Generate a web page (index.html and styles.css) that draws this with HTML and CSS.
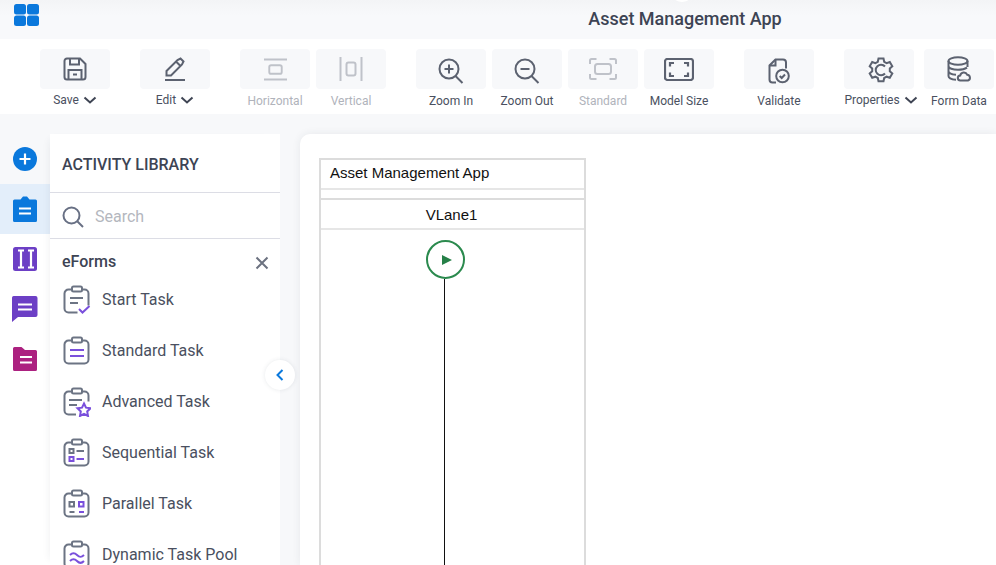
FILE: index.html
```html
<!DOCTYPE html>
<html lang="en">
<head>
<meta charset="utf-8">
<title>Asset Management App</title>
<link rel="stylesheet" href="styles.css">
</head>
<body>
<div class="app">
  <header class="topbar">
    <svg class="logo" viewBox="0 0 26 24"><rect x="1" y="1" width="12" height="10.500" rx="2.500"/><rect x="14" y="1" width="12" height="10.500" rx="2.500"/><rect x="1" y="12.500" width="12" height="10.500" rx="2.500"/><rect x="14" y="12.500" width="12" height="10.500" rx="2.500"/></svg>
    <h1 class="app-title">Asset Management App</h1>
    <span class="top-notch"></span>
  </header>

  <nav class="toolbar">
    <div class="tool tool-save">
      <div class="tool-box"><svg viewBox="0 0 24 24" class="ico"><path d="M4 1.500h13l5.500 5.500v13a2.500 2.500 0 0 1-2.500 2.500h-16a2.500 2.500 0 0 1-2.500-2.500v-16a2.500 2.500 0 0 1 2.500-2.500z"/><path d="M7 1.500v6h9v-6M5.500 22.500v-9.500h13v9.500M10 17.500h4"/></svg></div>
      <div class="tool-label tool-label-menu">Save <svg class="chev" viewBox="0 0 14 8"><path d="M1.500 1.500l5.500 5 5.500-5"/></svg></div>
    </div>
    <div class="tool tool-edit">
      <div class="tool-box"><svg viewBox="0 0 24 24" class="ico"><path d="M3.500 18.500v-4.500l11-11 3 -1.500 3 3-1.500 3-11 11zM13 4.500l5 5"/><path d="M2 23h20"/></svg></div>
      <div class="tool-label tool-label-menu">Edit <svg class="chev" viewBox="0 0 14 8"><path d="M1.500 1.500l5.500 5 5.500-5"/></svg></div>
    </div>
    <div class="tool tool-off tool-horizontal">
      <div class="tool-box"><svg viewBox="0 0 26 24" class="ico ico-wide"><path d="M1 1.500h24M1 22.500h24"/><rect x="6.500" y="7.500" width="13" height="9" rx="2"/></svg></div>
      <div class="tool-label">Horizontal</div>
    </div>
    <div class="tool tool-off tool-vertical">
      <div class="tool-box"><svg viewBox="0 0 24 24" class="ico"><path d="M1.500 0v24M22.500 0v24"/><rect x="7.500" y="5.500" width="9" height="13" rx="2"/></svg></div>
      <div class="tool-label">Vertical</div>
    </div>
    <div class="tool tool-zoomin">
      <div class="tool-box"><svg viewBox="0 0 26 26" class="ico ico-lg ico-low"><circle cx="11" cy="11" r="9.500"/><path d="M17.500 18l7 7M11 6.500v9M6.500 11h9"/></svg></div>
      <div class="tool-label">Zoom In</div>
    </div>
    <div class="tool tool-zoomout">
      <div class="tool-box"><svg viewBox="0 0 26 26" class="ico ico-lg ico-low"><circle cx="11" cy="11" r="9.500"/><path d="M17.500 18l7 7M6.500 11h9"/></svg></div>
      <div class="tool-label">Zoom Out</div>
    </div>
    <div class="tool tool-off tool-standard">
      <div class="tool-box"><svg viewBox="0 0 28 22" class="ico ico-frame"><path d="M1 6v-3.500a1.500 1.500 0 0 1 1.500-1.500h5M20.500 1h5a1.500 1.500 0 0 1 1.500 1.500v3.500M27 16v3.500a1.500 1.500 0 0 1-1.500 1.500h-5M7.500 21h-5a1.500 1.500 0 0 1-1.500-1.500v-3.500"/><rect x="6" y="6" width="16" height="10" rx="2.500"/></svg></div>
      <div class="tool-label">Standard</div>
    </div>
    <div class="tool tool-model">
      <div class="tool-box"><svg viewBox="0 0 30 23" class="ico ico-frame-lg"><rect x="1" y="1" width="28" height="21" rx="2.500"/><path d="M6 8.500v-3.500h4M20 5h4v3.500M24 14.500v3.500h-4M10 18h-4v-3.500"/></svg></div>
      <div class="tool-label">Model Size</div>
    </div>
    <div class="tool tool-validate">
      <div class="tool-box"><svg viewBox="0 0 22 26" class="ico ico-tall ico-low"><path d="M8 24.500h-3.500a3 3 0 0 1-3-3v-14l6-6h7.500a3 3 0 0 1 3 3v6"/><path d="M7.500 1.500v6h-6"/><circle cx="14.500" cy="18" r="6.300"/><path d="M11.700 18l2 2 3.300-3.500"/></svg></div>
      <div class="tool-label">Validate</div>
    </div>
    <div class="tool tool-props">
      <div class="tool-box"><svg viewBox="0 0 26 26" class="ico ico-lg ico-gear"><path d="M10.500 1.500h5l.7 3.300 2.400 1.300 3.200-1.100 2.500 4.300-2.500 2.200v2.800l2.500 2.200-2.500 4.300-3.200-1.100-2.400 1.300-.7 3.300h-5l-.7-3.300-2.400-1.300-3.200 1.100-2.500-4.300 2.500-2.200v-2.800l-2.500-2.200 2.500-4.300 3.200 1.100 2.400-1.300z"/><path d="M17 9.500a5.300 5.300 0 1 0 0 7"/></svg></div>
      <div class="tool-label tool-label-menu tool-label-props">Properties <svg class="chev" viewBox="0 0 14 8"><path d="M1.500 1.500l5.500 5 5.500-5"/></svg></div>
    </div>
    <div class="tool tool-data">
      <div class="tool-box"><svg viewBox="0 0 24 26" class="ico ico-lg"><ellipse cx="11" cy="5" rx="9.500" ry="3.800"/><path d="M1.500 5v15c0 2 3.500 3.500 7.500 3.800M20.500 5v6M1.500 10c0 2.200 4.200 3.800 9.500 3.800 3.500 0 7-.8 9-2.200M1.500 15c0 2 3.500 3.500 7.500 3.800"/><path d="M13.500 24.500a2.500 2.500 0 0 1-.3-5 3.700 3.700 0 0 1 7-.8 3 3 0 0 1 .8 5.800z"/></svg></div>
      <div class="tool-label">Form Data</div>
    </div>
  </nav>

  <div class="workspace">
    <aside class="rail">
      <div class="rail-item"><svg class="rail-ico" viewBox="0 0 24 24"><circle cx="12" cy="12" r="12" fill="#0a78dc"/><path d="M12 6.500v11M6.500 12h11" class="rail-w"/></svg></div>
      <div class="rail-item rail-active"><svg class="rail-ico rail-ico-clip" viewBox="0 0 24 26"><path fill="#0a78dc" d="M1.500 3.500h6l2.500-3h4l2.500 3h6a1.500 1.500 0 0 1 1.500 1.500v19.500a1.500 1.500 0 0 1-1.500 1.500h-21a1.500 1.500 0 0 1-1.500-1.500v-19.500a1.500 1.500 0 0 1 1.500-1.500z"/><path d="M6 12.500h12M6 17.500h12" class="rail-w"/></svg></div>
      <div class="rail-item"><svg class="rail-ico" viewBox="0 0 24 24"><rect width="24" height="24" rx="2.500" fill="#6c3fc5"/><path d="M5 3.500h6M8 3.500v17M5 20.500h6M15 3.500h6M18 3.500v17M15 20.500h6" class="rail-w"/></svg></div>
      <div class="rail-item"><svg class="rail-ico rail-ico-chat" viewBox="0 0 26 26"><path fill="#6c3fc5" d="M2.500 0h21a2 2 0 0 1 2 2v17a2 2 0 0 1-2 2h-17.500l-6 5v-24a2 2 0 0 1 2.500-2z"/><path d="M6 8.500h14M6 13.500h14" class="rail-w"/></svg></div>
      <div class="rail-item"><svg class="rail-ico" viewBox="0 0 24 24"><path fill="#ac2180" d="M0 1.500a1.500 1.500 0 0 1 1.500-1.500h7l3.500 3h10.500a1.500 1.500 0 0 1 1.500 1.500v18a1.500 1.500 0 0 1-1.500 1.500h-21a1.500 1.500 0 0 1-1.500-1.500z"/><path d="M7 10h12M7 15.500h12" class="rail-w"/></svg></div>
    </aside>

    <section class="library">
      <h2 class="lib-title">ACTIVITY LIBRARY</h2>
      <div class="lib-search">
        <svg class="search-ico" viewBox="0 0 22 22"><circle cx="9.500" cy="9.500" r="8"/><path d="M15.500 15.500l5.500 5.500"/></svg>
        <span class="search-text">Search</span>
      </div>
      <div class="lib-group">
        <span>eForms</span>
        <svg class="close-ico" viewBox="0 0 14 14"><path d="M1.500 1.500l11 11M12.500 1.500l-11 11"/></svg>
      </div>
      <ul class="task-list">
        <li class="task"><svg class="task-ico" viewBox="0 0 28 30"><path class="g" d="M9 4.500h-3.500a4 4 0 0 0-4 4v15a4 4 0 0 0 4 4h9M19 4.500h2.500a4 4 0 0 1 4 4v12"/><rect class="g" x="9" y="1.500" width="10" height="5" rx="1.500"/><path class="g" d="M7 13h13M7 18h8"/><path class="p" d="M16 24l3.500 3.500 7-6.500"/></svg><span>Start Task</span></li>
        <li class="task"><svg class="task-ico" viewBox="0 0 28 30"><path class="g" d="M9 4.500h-3.500a4 4 0 0 0-4 4v15a4 4 0 0 0 4 4h16a4 4 0 0 0 4-4v-15a4 4 0 0 0-4-4h-2.500"/><rect class="g" x="9" y="1.500" width="10" height="5" rx="1.500"/><path class="p" d="M7 14h14M7 20h14"/></svg><span>Standard Task</span></li>
        <li class="task"><svg class="task-ico" viewBox="0 0 28 30"><path class="g" d="M9 4.500h-3.500a4 4 0 0 0-4 4v15a4 4 0 0 0 4 4h7.500M19 4.500h2.500a4 4 0 0 1 4 4v6"/><rect class="g" x="9" y="1.500" width="10" height="5" rx="1.500"/><path class="g" d="M6 13h13M6 18h8"/><path class="p" d="M21 16.500l2 4.200 4.500.6-3.300 3.100.8 4.600-4-2.200-4 2.200.8-4.600-3.300-3.100 4.500-.6z"/></svg><span>Advanced Task</span></li>
        <li class="task"><svg class="task-ico" viewBox="0 0 28 30"><path class="g" d="M9 4.500h-3.500a4 4 0 0 0-4 4v15a4 4 0 0 0 4 4h16a4 4 0 0 0 4-4v-15a4 4 0 0 0-4-4h-2.500"/><rect class="g" x="9" y="1.500" width="10" height="5" rx="1.500"/><rect class="g" x="6.500" y="11" width="4" height="4"/><path class="g" d="M13.500 13h7.500"/><rect class="p" x="6.500" y="19" width="4" height="4"/><path class="p" d="M13.500 21h7.500"/></svg><span>Sequential Task</span></li>
        <li class="task"><svg class="task-ico" viewBox="0 0 28 30"><path class="g" d="M9 4.500h-3.500a4 4 0 0 0-4 4v15a4 4 0 0 0 4 4h16a4 4 0 0 0 4-4v-15a4 4 0 0 0-4-4h-2.500"/><rect class="g" x="9" y="1.500" width="10" height="5" rx="1.500"/><rect class="g" x="6.500" y="13" width="4.500" height="4.500"/><rect class="p" x="16" y="13" width="4.500" height="4.500"/><path class="g" d="M6.500 23h5"/><path class="p" d="M16 23h5"/></svg><span>Parallel Task</span></li>
        <li class="task"><svg class="task-ico" viewBox="0 0 28 30"><path class="g" d="M9 4.500h-3.500a4 4 0 0 0-4 4v15a4 4 0 0 0 4 4h16a4 4 0 0 0 4-4v-15a4 4 0 0 0-4-4h-2.500"/><rect class="g" x="9" y="1.500" width="10" height="5" rx="1.500"/><path class="p" d="M7 15c2.500-2.500 4.500-2.500 7 0s4.500 2.500 7 0M7 21c2.500-2.500 4.500-2.500 7 0s4.500 2.500 7 0"/></svg><span>Dynamic Task Pool</span></li>
      </ul>
      <button class="collapse" type="button" aria-label="Collapse"><svg viewBox="0 0 8 12"><path d="M6.500 1l-5 5 5 5"/></svg></button>
    </section>

    <main class="canvas">
      <div class="pool">
        <div class="pool-title">Asset Management App</div>
        <div class="pool-gap"></div>
        <div class="lane-head">VLane1</div>
        <div class="lane-body">
          <div class="start-node"><svg viewBox="0 0 10 10"><path d="M0 0l10 5-10 5z"/></svg></div>
          <div class="lane-line"></div>
        </div>
      </div>
    </main>
  </div>
</div>
</body>
</html>
```

FILE: styles.css
```css
* { box-sizing: border-box; }
html, body { margin: 0; height: 100%; overflow: hidden; }
body { font-family: Roboto, "Liberation Sans", sans-serif; background: #f7f8fa; color: #3b4252; }

.app { width: 996px; height: 565px; display: flex; flex-direction: column; overflow: hidden; }

.topbar { height: 39px; flex: none; position: relative; display: flex; justify-content: center; align-items: center;
  background: linear-gradient(#f3f4f6, #f8f9fb 40%); }
.logo { position: absolute; left: 13px; top: 3px; width: 26px; height: 24px; fill: #0a78dc; }
.app-title { margin: -2px 0 0 374px; font-size: 18px; font-weight: 500; color: #3d4454; white-space: nowrap; }
.top-notch { position: absolute; left: 674px; top: -8px; width: 16px; height: 10px; border-radius: 50%; background: #fff; }

.toolbar { height: 75px; flex: none; background: #fff; display: flex; padding: 10px 0 0 40px; }
.tool { width: 70px; flex: none; display: flex; flex-direction: column; align-items: center; }
.tool-box { width: 70px; height: 40px; background: #f7f8fa; border-radius: 4px; display: flex; align-items: center; justify-content: center; }
.tool-label { margin-top: 5px; font-size: 12px; line-height: 14px; color: #4a5060; white-space: nowrap; display: flex; align-items: center; gap: 4px; }
.tool-label-menu { margin-top: 4px; }
.tool-label-props { margin-left: 4px; }
.tool-off .tool-label { color: #b0b3bb; }
.tool-save, .tool-edit { margin-right: 30px; }
.tool-horizontal, .tool-zoomin, .tool-zoomout, .tool-standard { margin-right: 6px; }
.tool-vertical, .tool-model, .tool-validate { margin-right: 30px; }
.tool-props { margin-right: 10px; }

.ico { width: 24px; height: 24px; fill: none; stroke: #5c6270; stroke-width: 2; }
.ico-wide { width: 25px; height: 23px; stroke: #bfc2c9; }
.tool-vertical .ico { stroke: #bfc2c9; }
.ico-lg { width: 26px; height: 26px; }
.ico-low { margin-top: 3px; }
.ico-gear { margin: 2px 0 0 4px; }
.ico-frame { width: 28px; height: 22px; stroke: #bfc2c9; }
.ico-frame-lg { width: 30px; height: 23px; stroke-width: 2.200; }
.ico-tall { width: 22px; height: 26px; }
.chev { width: 14px; height: 8px; fill: none; stroke: #3f4554; stroke-width: 2; }

.workspace { flex: 1; display: flex; min-height: 0; padding-top: 20px; }

.rail { width: 50px; flex: none; display: flex; flex-direction: column; }
.rail-item { height: 50px; flex: none; display: flex; align-items: center; justify-content: center; background: #fff; }
.rail-item:first-child { background: #f7f8fa; }
.rail-active { background: #e3eefa; }
.rail-ico { width: 24px; height: 24px; }
.rail-ico-clip { height: 26px; }
.rail-ico-chat { width: 26px; height: 26px; }
.rail-w { fill: none; stroke: #fff; stroke-width: 2.200; }
.rail::after { content: ""; flex: 1; background: #fff; }

.library { width: 230px; flex: none; background: #fff; position: relative; display: flex; flex-direction: column;
  box-shadow: -6px 0 8px -6px rgba(40, 50, 70, .08); }
.lib-title { margin: 0; height: 59px; flex: none; padding: 2px 12px 0; display: flex; align-items: center; font-size: 16px; font-weight: 500; color: #3d4454;
  border-bottom: 1px solid #dcdde5; }
.lib-search { height: 46px; flex: none; padding: 2px 12px 0; display: flex; align-items: center; gap: 11px; border-bottom: 1px solid #dcdde5; }
.search-ico { width: 22px; height: 22px; fill: none; stroke: #687084; stroke-width: 2; }
.search-text { font-size: 16px; color: #b4b7be; }
.lib-group { height: 45px; flex: none; padding: 0 11px 0 12px; display: flex; align-items: center; justify-content: space-between; font-size: 16px; font-weight: 500; color: #3d4454; }
.close-ico { width: 14px; height: 14px; margin-top: 3px; fill: none; stroke: #6c7280; stroke-width: 2; }
.task-list { list-style: none; margin: -10px 0 0; padding: 0 0 0 13px; }
.task { height: 51px; display: flex; align-items: center; gap: 11px; font-size: 16px; color: #4a5060; white-space: nowrap; }
.task-ico { width: 28px; height: 30px; flex: none; fill: none; stroke-width: 2; }
.task-ico .g { stroke: #6c7484; }
.task-ico .p { stroke: #7a50dc; }
.collapse { position: absolute; right: -15px; top: 226px; width: 30px; height: 30px; border: 0; border-radius: 50%; padding: 0; background: #fff;
  display: flex; align-items: center; justify-content: center; box-shadow: 0 0 4px rgba(60, 70, 90, .12); }
.collapse svg { width: 8px; height: 12px; fill: none; stroke: #0a78dc; stroke-width: 2; }

.canvas { flex: 1; margin-left: 20px; background: #fff; border-radius: 10px 0 0 0; padding: 24px 0 0 19px; min-width: 0; overflow: hidden;
  box-shadow: 0 0 8px rgba(40, 50, 70, .08); font-family: "Liberation Sans", Arial, sans-serif; color: #111; font-size: 15px; }
.pool { width: 267px; height: 420px; border: 2px solid #dcdcdc; display: flex; flex-direction: column; }
.pool-title { height: 30px; flex: none; padding: 0 0 3px 9px; display: flex; align-items: center; border-bottom: 2px solid #e6e6e6; }
.pool-gap { height: 10px; flex: none; border-bottom: 2px solid #dcdcdc; }
.lane-head { height: 30px; flex: none; padding: 1px 2px 0 0; display: flex; align-items: center; justify-content: center; border-bottom: 2px solid #e6e6e6; }
.lane-body { flex: 1; display: flex; flex-direction: column; align-items: flex-start; padding: 10px 0 0 105px; }
.start-node { width: 39px; height: 39px; flex: none; border: 2px solid #2b8a4e; border-radius: 50%; display: flex; align-items: center; justify-content: center; }
.start-node svg { width: 10px; height: 10px; margin-left: 2px; fill: #268048; }
.lane-line { width: 1px; flex: 1; margin-left: 18px; background: #111; }
```
